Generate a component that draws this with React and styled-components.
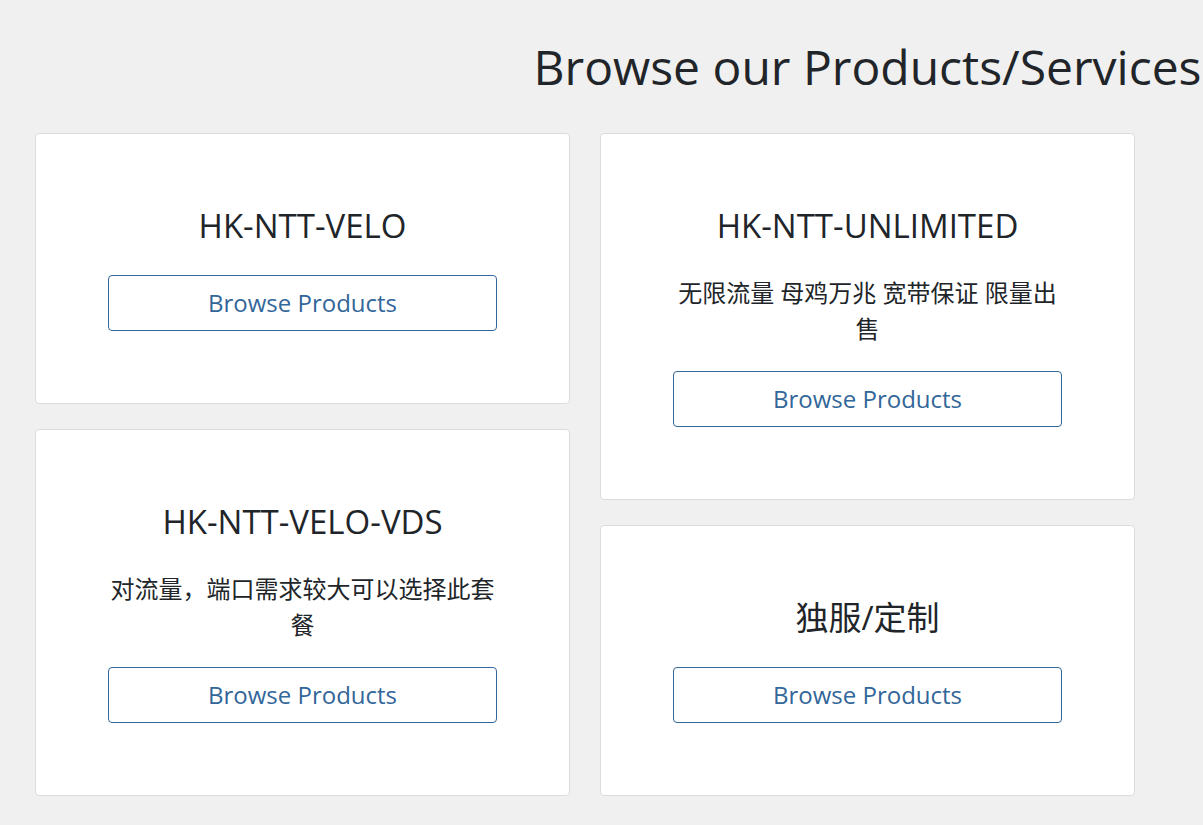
import styled, { createGlobalStyle } from "styled-components";

const GlobalStyle = createGlobalStyle`
  html, body {
    margin: 0;
    padding: 0;
    background: #f0f0f0;
    font-family: "Open Sans", "Noto Sans CJK SC", sans-serif;
    color: #212529;
    overflow: hidden;
  }
`;

const Page = styled.div`
  display: grid;
  grid-template-columns: 535px 535px;
  column-gap: 30px;
  padding: 38px 0 0 35px;
`;

const Header = styled.div`
  grid-column: 2;
  display: flex;
  justify-content: center;
  margin-bottom: 37px;
`;

const Title = styled.h1`
  margin: 0;
  font-size: 48px;
  font-weight: 400;
  line-height: 1.2;
  white-space: nowrap;
`;

const Column = styled.div`
  display: flex;
  flex-direction: column;
  gap: 25px;
`;

const Card = styled.div`
  background: #fff;
  border: 1px solid #dcdcdc;
  border-radius: 4px;
  padding: 72px;
  display: flex;
  flex-direction: column;
  text-align: center;
`;

const CardTitle = styled.h3`
  margin: 0 0 30px;
  font-size: 33px;
  font-weight: 400;
  line-height: 39px;
`;

const Description = styled.p`
  margin: 0 0 24px;
  font-size: 24px;
  line-height: 36px;
`;

const Button = styled.a`
  display: flex;
  align-items: center;
  justify-content: center;
  height: 54px;
  border: 1px solid #336699;
  border-radius: 4px;
  color: #336699;
  font-size: 24px;
  text-decoration: none;
  cursor: pointer;
`;

const ProductCard = ({ name, desc }) => (
  <Card>
    <CardTitle>{name}</CardTitle>
    {desc && <Description>{desc}</Description>}
    <Button>Browse Products</Button>
  </Card>
);

const App = () => {
  return (
    <>
      <GlobalStyle />
      <Page>
        <Header>
          <Title>Browse our Products/Services</Title>
        </Header>
        <Column>
          <ProductCard name="HK-NTT-VELO" />
          <ProductCard name="HK-NTT-VELO-VDS" desc="对流量，端口需求较大可以选择此套餐" />
        </Column>
        <Column>
          <ProductCard name="HK-NTT-UNLIMITED" desc="无限流量 母鸡万兆 宽带保证 限量出售" />
          <ProductCard name="独服/定制" />
        </Column>
      </Page>
    </>
  );
};

export default App;
